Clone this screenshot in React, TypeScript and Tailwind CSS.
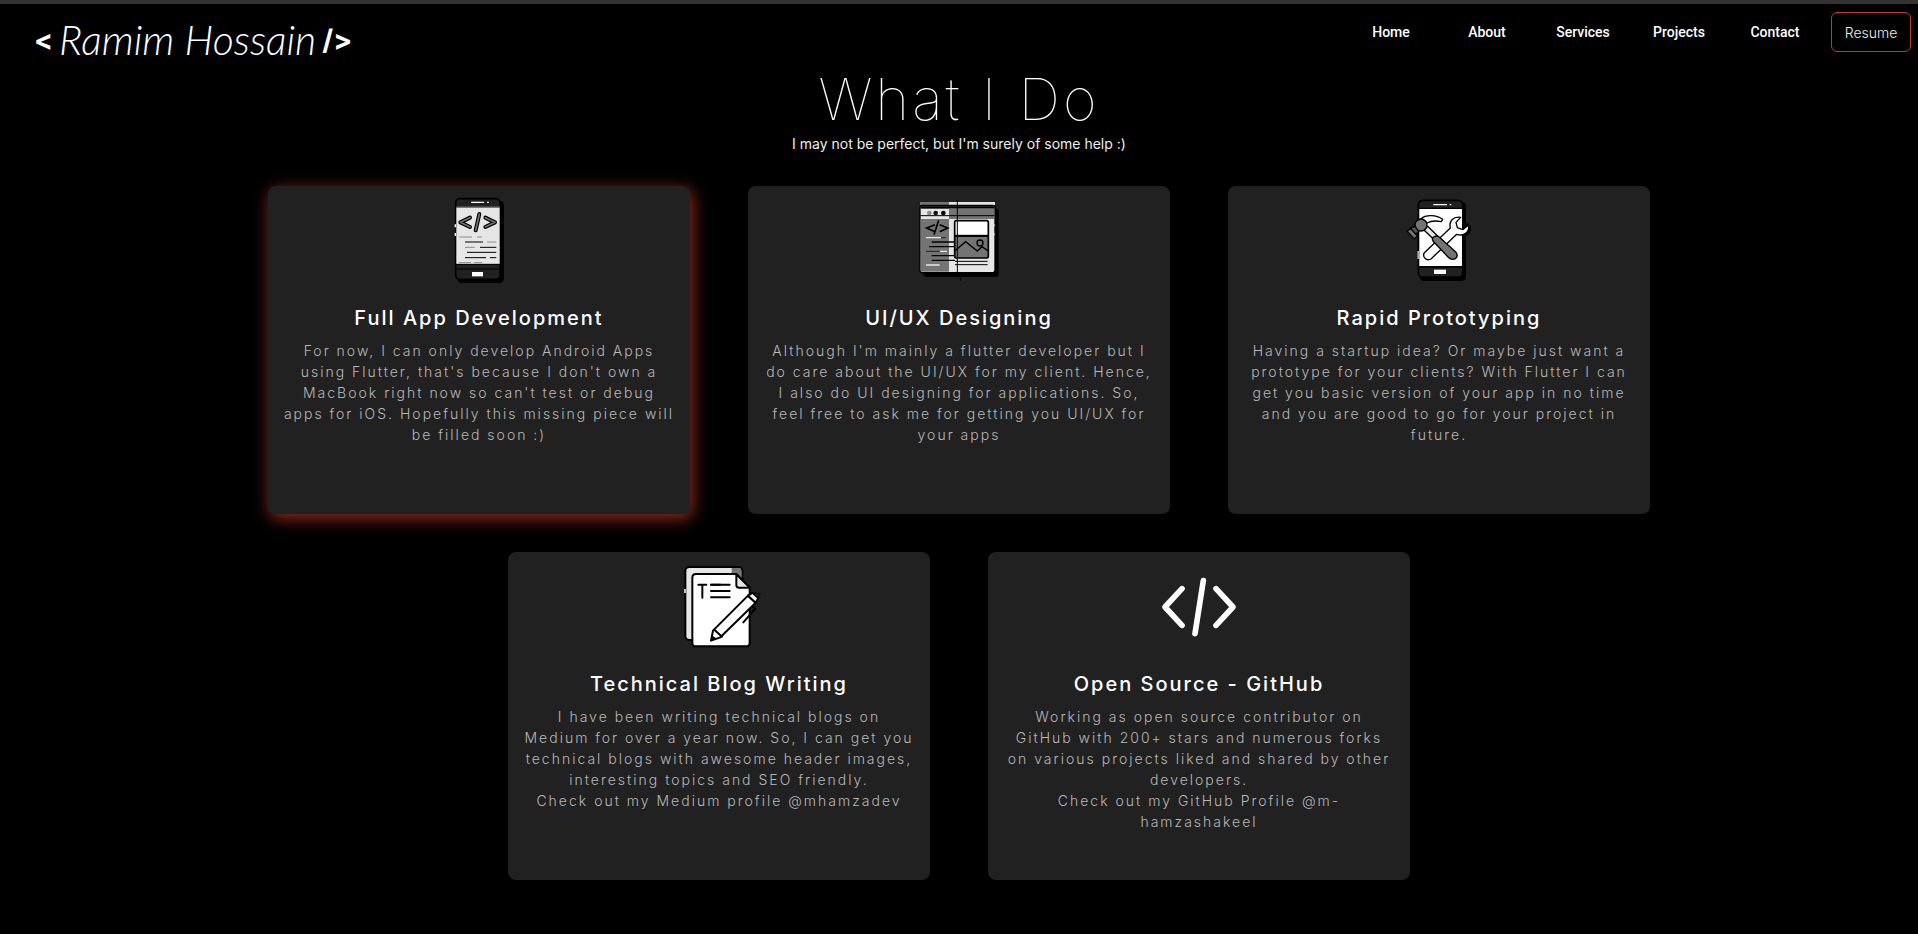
import type { ReactNode } from "react";

function PhoneCodeIcon() {
  return (
    <svg viewBox="-18 9 300 300" className="size-25" fill="none" aria-hidden="true">
      <rect x="67" y="48" width="140" height="246" rx="14" fill="#000" />
      <rect x="62" y="41" width="133" height="242" rx="13" fill="#212121" stroke="#000" strokeWidth="5" />
      <rect x="64" y="66" width="130" height="171" fill="#e6e6e6" />
      <path d="M64 66H194" stroke="#fff" strokeWidth="3" />
      <path d="M59 252H197M61 66H196M61 238H196" stroke="#000" strokeWidth="3" />
      <path d="M108 52H147M156 52H162" stroke="#fff" strokeWidth="4" />
      <rect x="111" y="261" width="33" height="13" fill="#fff" />
      <path d="M61 118V127M61 144V153" stroke="#fff" strokeWidth="4" />
      <g strokeLinecap="round" strokeLinejoin="round">
        <path d="M105 98L76 112L105 126M133 87L122 136M151 98L180 112L151 126" stroke="#000" strokeWidth="12" />
        <path d="M105 98L76 112L105 126M133 87L122 136M151 98L180 112L151 126" stroke="#747474" strokeWidth="5" />
      </g>
      <path d="M72 156H111M126 156H141M156 171H184M90 187H119M72 233H108M117 233H141" stroke="#8b8b8b" strokeWidth="3" />
      <path d="M90 171H144M135 187H184M96 202H184M90 218H153M165 218H184" stroke="#000" strokeWidth="3" />
    </svg>
  );
}

function BrowserIcon() {
  return (
    <svg viewBox="12 9 300 300" className="size-25" fill="none" aria-hidden="true">
      <path d="M45 258L62 276H272Q281 274 281 266V76L268 66Z" fill="#000" />
      <rect x="45" y="51" width="87" height="10" fill="#747474" />
      <rect x="132" y="51" width="138" height="10" fill="#e6e6e6" />
      <rect x="45" y="61" width="225" height="202" rx="7" fill="#e6e6e6" stroke="#000" strokeWidth="4" />
      <rect x="47" y="60" width="221" height="11" fill="#000" />
      <path d="M48 64H267" stroke="#6b6b6b" strokeWidth="1" />
      <rect x="132" y="71" width="135" height="31" fill="#747474" />
      <rect x="47" y="102" width="85" height="158" fill="#747474" />
      <path d="M46 92H268" stroke="#000" strokeWidth="3" />
      <circle cx="73" cy="84" r="7" fill="#8b8b8b" />
      <circle cx="92" cy="84" r="7" fill="#111" />
      <circle cx="115" cy="84" r="7" fill="#000" />
      <path d="M90 119L65 129L90 140M101 106L87 149M104 119L128 129L104 140" stroke="#000" strokeWidth="5" />
      <path d="M63 158H108M105 199H126M63 240H104" stroke="#e6e6e6" strokeWidth="4" />
      <path d="M108 158H123M63 199H104" stroke="#222" strokeWidth="3" />
      <rect x="149" y="107" width="101" height="112" rx="5" fill="#747474" stroke="#000" strokeWidth="5" />
      <rect x="152" y="110" width="95" height="39" fill="#fff" />
      <path d="M149 153H250" stroke="#000" strokeWidth="6" />
      <path d="M150 197L182 170L217 198L231 185L248 197" stroke="#000" strokeWidth="4" />
      <circle cx="225" cy="174" r="9" stroke="#000" strokeWidth="4" />
      <path d="M80 171H150M72 185H150M80 212H150M80 226H150" stroke="#000" strokeWidth="4" />
      <path d="M150 229H248M150 239H248" stroke="#000" strokeWidth="3" />
      <path d="M157 45V278M166 276V288" stroke="#000" strokeWidth="3" />
      <path d="M269 118V124M269 145V151" stroke="#e6e6e6" strokeWidth="2" />
    </svg>
  );
}

function PrototypeIcon() {
  return (
    <svg viewBox="-3 9 300 300" className="size-25" fill="none" aria-hidden="true">
      <rect x="89" y="51" width="139" height="237" rx="13" fill="#000" />
      <path d="M226 112Q243 118 243 134Q238 155 218 154Z" fill="#000" />
      <rect x="85" y="46" width="133" height="230" rx="13" fill="#212121" stroke="#000" strokeWidth="5" />
      <rect x="88" y="72" width="128" height="171" fill="#fff" />
      <path d="M85 70H217M85 246H217" stroke="#000" strokeWidth="4" />
      <path d="M130 59H171M179 59H184" stroke="#fff" strokeWidth="4" />
      <rect x="132" y="254" width="36" height="13" fill="#fff" />
      <rect x="82" y="198" width="6" height="24" fill="#aaa" />
      <g stroke="#000" strokeWidth="4" strokeLinejoin="round">
        <path
          d="M103 203L181 129C176 108 189 94 212 97L198 112L202 128L218 134L236 120C239 142 220 155 200 148L123 222C109 229 96 216 103 203Z"
          fill="#fff"
        />
        <path d="M93 101C108 88 139 89 158 103L154 110C139 107 124 106 112 114Z" fill="#fff" />
        <path d="M101 134L113 124L143 153L131 163Z" fill="#e6e6e6" />
        <path
          d="M129 168Q124 158 133 155Q142 150 150 158L198 202Q206 213 196 221Q185 227 174 216Z"
          fill="#747474"
        />
        <path d="M51 138L63 131L83 153L72 161Z" fill="#747474" />
        <circle cx="93" cy="120" r="18" fill="#747474" />
        <path d="M61 129L75 124L86 140L78 148Z" fill="#555" />
      </g>
    </svg>
  );
}

function BlogIcon() {
  return (
    <svg viewBox="-3 -6 300 300" className="size-25" fill="none" aria-hidden="true">
      <g stroke="#000" strokeWidth="6" strokeLinejoin="round" strokeLinecap="round">
        <rect x="46" y="33" width="171" height="219" rx="12" fill="#e6e6e6" />
        <path d="M185 36H209Q214 38 214 44V66H185Z" fill="#747474" stroke="none" />
        <path
          d="M78 54H199L239 94V260Q239 271 228 271H78Q67 271 67 260V65Q67 54 78 54Z"
          fill="#fff"
        />
        <path d="M199 55V87Q199 95 207 95H239Z" fill="#e6e6e6" />
        <path d="M85 86H109M97 86V125M123 86H151M123 105H179M123 124H179" />
        <path d="M123 86H179" />
        <path d="M242 148L256 158L220 199" />
        <path d="M123 254L129 224L234 119L257 140L151 244Z" fill="#fff" />
        <path d="M133 221L156 242" />
        <path d="M234 119L248 110L265 126L257 140Z" fill="#f1f1f1" />
        <path d="M250 112L271 112L264 125Z" fill="#222" strokeWidth="3" />
      </g>
      <path d="M124 253L128 239L138 247Z" fill="#000" />
      <path d="M45 99V111" stroke="#e6e6e6" strokeWidth="5" />
    </svg>
  );
}

function CodeIcon() {
  return (
    <svg viewBox="27 -21 300 300" className="size-25" fill="none" aria-hidden="true">
      <path
        d="M126 83L75 138L126 193M190 59L165 218M228 83L279 138L228 193"
        stroke="#fff"
        strokeWidth="17"
        strokeLinecap="round"
        strokeLinejoin="round"
      />
    </svg>
  );
}

type Service = { title: string; text: string; icon: ReactNode; active?: boolean };

const services: Service[] = [
  {
    title: "Full App Development",
    text: "For now, I can only develop Android Apps\nusing Flutter, that's because I don't own a\nMacBook right now so can't test or debug\napps for iOS. Hopefully this missing piece will\nbe filled soon :)",
    icon: <PhoneCodeIcon />,
    active: true,
  },
  {
    title: "UI/UX Designing",
    text: "Although I'm mainly a flutter developer but I\ndo care about the UI/UX for my client. Hence,\nI also do UI designing for applications. So,\nfeel free to ask me for getting you UI/UX for\nyour apps",
    icon: <BrowserIcon />,
  },
  {
    title: "Rapid Prototyping",
    text: "Having a startup idea? Or maybe just want a\nprototype for your clients? With Flutter I can\nget you basic version of your app in no time\nand you are good to go for your project in\nfuture.",
    icon: <PrototypeIcon />,
  },
  {
    title: "Technical Blog Writing",
    text: "I have been writing technical blogs on\nMedium for over a year now. So, I can get you\ntechnical blogs with awesome header images,\ninteresting topics and SEO friendly.\nCheck out my Medium profile @mhamzadev",
    icon: <BlogIcon />,
  },
  {
    title: "Open Source - GitHub",
    text: "Working as open source contributor on\nGitHub with 200+ stars and numerous forks\non various projects liked and shared by other\ndevelopers.\nCheck out my GitHub Profile @m-\nhamzashakeel",
    icon: <CodeIcon />,
  },
];

const links = ["Home", "About", "Services", "Projects", "Contact"];

function ServiceCard({ title, text, icon, active }: Service) {
  return (
    <article
      className={
        active
          ? "flex min-h-82 w-full max-w-[422px] flex-col items-center rounded-lg bg-[#212121] px-2 pt-0.5 text-center shadow-[2px_4px_16px_1px_rgba(192,57,43,0.7)]"
          : "flex min-h-82 w-full max-w-[422px] flex-col items-center rounded-lg bg-[#212121] px-2 pt-0.5 text-center"
      }
    >
      {icon}
      <h2 className="mt-4 text-[20px] leading-7 font-medium tracking-[2px] text-white">{title}</h2>
      <p className="mt-2 text-[14px] leading-[21px] font-light tracking-[2px] whitespace-pre-line text-[#b8b8b8]">
        {text}
      </p>
    </article>
  );
}

export default function App() {
  return (
    <div className="min-h-screen border-t-4 border-[#333] bg-black font-['Inter','Liberation_Sans',sans-serif] text-white">
      <header className="flex items-start justify-between pr-[7px] pl-[34px]">
        <a href="#home" className="flex items-center gap-1.5 pt-3 text-white">
          <span className="text-[28px] leading-12 font-bold">&lt;</span>
          <span className="font-['Lato',sans-serif] text-[41px] leading-12 font-light italic">Ramim Hossain</span>
          <span className="text-[28px] leading-12 font-bold">/&gt;</span>
        </a>
        <nav className="flex items-start pt-2">
          {links.map((link) => (
            <a
              key={link}
              href={`#${link.toLowerCase()}`}
              className="w-24 pt-2 text-center font-['Roboto',sans-serif] text-[14px] leading-6 font-medium"
            >
              {link}
            </a>
          ))}
          <button
            type="button"
            className="ml-2 h-10 w-20 rounded-md border border-[#c0392b] text-[14px] font-light text-[#eee]"
          >
            Resume
          </button>
        </nav>
      </header>
      <main className="mx-auto max-w-[1440px]">
        <h1 className="text-center text-[58px] leading-[70px] font-thin tracking-[3px]">What I Do</h1>
        <p className="text-center text-[14px] leading-5 text-[#eee]">
          I may not be perfect, but I'm surely of some help :)
        </p>
        <section className="mt-8 flex flex-wrap justify-center gap-x-[58px] gap-y-[38px] pb-10">
          {services.map((service) => (
            <ServiceCard key={service.title} {...service} />
          ))}
        </section>
      </main>
    </div>
  );
}
